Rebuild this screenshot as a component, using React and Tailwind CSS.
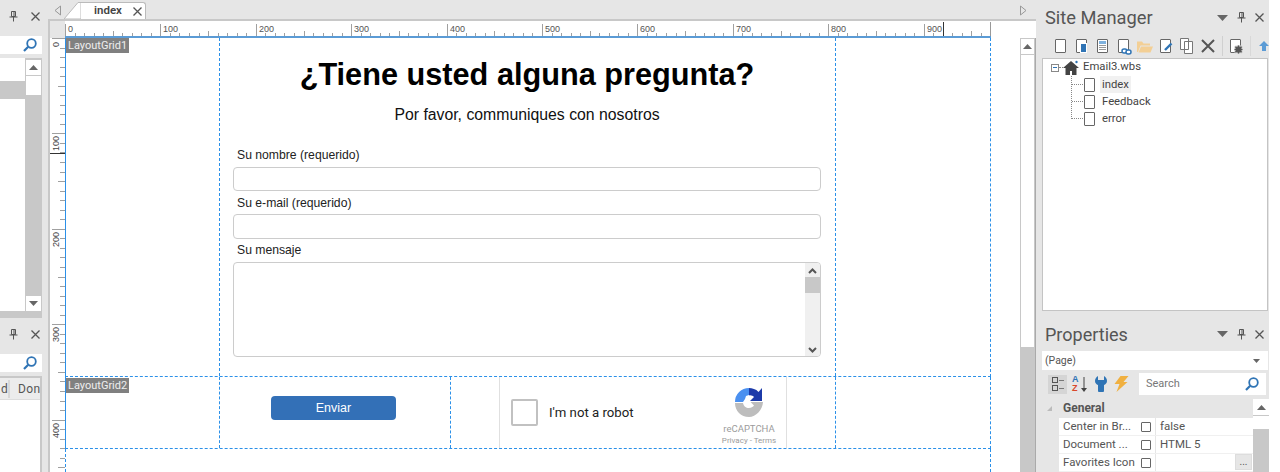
import React from 'react'

const SCALE = 95.4 / 100

function range(n) {
  return Array.from({ length: n }, (_, i) => i)
}

function Pin({ className = '' }) {
  return (
    <svg width="9" height="11" viewBox="0 0 9 11" className={className} fill="none" stroke="#555" strokeWidth="1">
      <path d="M2.500 .5h4v5h-4zM5 1v4.500M.5 6h8M4.500 6v4.500" />
    </svg>
  )
}

function Close() {
  return (
    <svg width="9" height="9" viewBox="0 0 9 9" stroke="#555" strokeWidth="1.300">
      <path d="M.5 .5l8 8M8.500 .5l-8 8" />
    </svg>
  )
}

function Caret() {
  return (
    <svg width="11" height="6" viewBox="0 0 11 6" fill="#666">
      <path d="M0 0h11l-5.500 6z" />
    </svg>
  )
}

function SearchIcon() {
  return (
    <svg width="14" height="14" viewBox="0 0 14 14" fill="none" stroke="#2f74b5" strokeWidth="1.800">
      <circle cx="8.500" cy="5.500" r="4.300" />
      <path d="M5.200 8.800L1 13" strokeWidth="2.200" />
    </svg>
  )
}

function ArrowBtn({ up, className = '' }) {
  return (
    <div className={`flex items-center justify-center bg-white ${className}`}>
      <svg width="9" height="5" viewBox="0 0 9 5" fill="#666">
        <path d={up ? 'M4.500 0L9 5H0z' : 'M0 0h9L4.500 5z'} />
      </svg>
    </div>
  )
}

function PageIcon({ className = '' }) {
  return <div className={`w-[11px] h-[14px] rounded-[1px] border border-[#666] bg-white ${className}`} />
}

function HRuler() {
  return (
    <svg width="970" height="17" className="block">
      {range(98).map(i => {
        const x = 0.5 + Math.round(i * 10 * SCALE)
        const major = i % 10 === 0
        const mid = i % 5 === 0
        return <line key={i} x1={x} x2={x} y1={major ? 3 : mid ? 10 : 12} y2="16" stroke="#a0a0a0" />
      })}
      {range(10).map(i => (
        <text key={i} x={Math.round(i * 100 * SCALE) + 3} y="11" fontSize="9" fontFamily="'Liberation Sans', sans-serif" fill="#555">
          {i * 100}
        </text>
      ))}
      <line x1="878.500" x2="878.500" y1="1" y2="16" stroke="#333" />
      <rect x="925" y="1" width="4" height="15" fill="#999" />
    </svg>
  )
}

function VRuler() {
  return (
    <svg width="15" height="434" className="block bg-white">
      {range(46).map(i => {
        const y = 0.5 + Math.round(i * 10 * SCALE)
        const major = i % 10 === 0
        const mid = i % 5 === 0
        return <line key={i} y1={y} y2={y} x1={major ? 2 : mid ? 8 : 10} x2="15" stroke="#a0a0a0" />
      })}
      {range(5).map(i => {
        const y = Math.round(i * 100 * SCALE) + (i === 0 ? 9 : 18)
        return (
          <text key={i} x="0" y="0" transform={`translate(9 ${y}) rotate(-90)`} fontSize="9" fontFamily="'Liberation Sans', sans-serif" fill="#444">
            {i * 100}
          </text>
        )
      })}
      <line x1="0" x2="15" y1="115.500" y2="115.500" stroke="#333" />
    </svg>
  )
}

function LeftPanel() {
  return (
    <aside className="w-[42px] shrink-0 flex flex-col overflow-hidden">
      <div className="h-[36px] shrink-0 flex items-center gap-[13px] pl-[9px] pb-[4px]">
        <Pin />
        <Close />
      </div>
      <div className="h-[18px] shrink-0 bg-white flex items-center justify-end pr-[5px]">
        <SearchIcon />
      </div>
      <div className="h-[4px] shrink-0" />
      <div className="h-[253px] shrink-0 flex bg-white">
        <div className="w-[25px] pt-[23px]">
          <div className="h-[18px] bg-[#c8c8c8]" />
        </div>
        <div className="w-[17px] bg-[#c8c8c8] flex flex-col px-px pt-[2px]">
          <ArrowBtn up className="h-[15px]" />
          <div className="h-[19px] bg-white mt-px" />
          <div className="flex-1" />
          <ArrowBtn className="h-[15px]" />
        </div>
      </div>
      <div className="h-[7px] shrink-0 bg-[#c8c8c8]" />
      <div className="h-[36px] shrink-0 flex items-center gap-[13px] pl-[9px] pb-[4px]">
        <Pin />
        <Close />
      </div>
      <div className="h-[18px] shrink-0 bg-white flex items-center justify-end pr-[5px]">
        <SearchIcon />
      </div>
      <div className="h-[4px] shrink-0" />
      <div className="flex-1 bg-white border-r-2 border-t-2 border-[#c8c8c8]">
        <div className="h-[22px] flex items-center bg-[#ececec] text-[12px] text-[#555] tracking-wide border-b border-[#ddd]">
          <span className="w-[10px] pl-px">d</span>
          <span className="pl-[8px] border-l-2 border-[#d8d8d8] whitespace-nowrap">Don</span>
        </div>
      </div>
    </aside>
  )
}

function TabStrip() {
  return (
    <div className="h-[19px] shrink-0 flex items-end relative">
      <svg width="9" height="11" viewBox="0 0 9 11" className="absolute left-[5px] top-[5px]" fill="none" stroke="#999">
        <path d="M7.500 1L2 5.500l5.500 4.500z" />
      </svg>
      <div className="w-[16px]" />
      <svg width="17" height="17" viewBox="0 0 17 17" className="block">
        <path d="M0 17L14 .5h3V17z" fill="#fff" stroke="#bbb" />
      </svg>
      <div className="h-[17px] w-[65px] bg-white border-t border-r border-[#bbb] rounded-tr-[3px] flex items-center pl-[13px] gap-[11px]">
        <span className="text-[11.500px] font-semibold text-[#444]">index</span>
        <Close />
      </div>
      <svg width="9" height="11" viewBox="0 0 9 11" className="absolute right-[8px] top-[5px]" fill="none" stroke="#999">
        <path d="M1.500 1L7 5.500 1.500 10z" />
      </svg>
    </div>
  )
}

function Captcha() {
  return (
    <div className="ml-[48px] w-[288px] h-full border-x border-[#e0e0e0] flex items-center bg-white">
      <div className="ml-[11px] w-[27px] h-[27px] rounded-[2px] border-2 border-[#c1c1c1]" />
      <span className="ml-[11px] text-[13.200px] text-[#222] font-['Roboto',sans-serif]">I'm not a robot</span>
      <div className="ml-auto mr-[11px] w-[52px] h-full flex flex-col items-center pt-[10px]">
        <svg width="30" height="30" viewBox="0 0 30 30">
          {/* blue, top left */}
          <path d="M15 1a14 14 0 0 0-14 14h8l2-3 1-3 3-1z" fill="#4a90f0" />
          {/* dark blue with its arrow, top right */}
          <path d="M15 1c3 0 7 1 9.500 4L28 1v13H16l4-4c-1-1-3-2-5-1.500z" fill="#1c3aa9" />
          {/* grey, bottom */}
          <path d="M1 16h8c.5 3 3 5 6 5 2 0 4-1 5-2.500l-3.500-3.500H29c-.5 8-7 15-14 15-8 0-14-6-14-14z" fill="#bdbdbd" />
        </svg>
        <span className="mt-[6px] text-[9.500px] leading-[11px] text-[#9b9b9b] font-['Roboto',sans-serif]">reCAPTCHA</span>
        <span className="mt-[2px] text-[8px] leading-[10px] text-[#9b9b9b] font-['Roboto',sans-serif] whitespace-nowrap">Privacy - Terms</span>
      </div>
    </div>
  )
}

function Canvas() {
  const cell = 'border-r border-dashed border-[#2b90e8]'
  const grid = 'w-[926px] shrink-0 grid border-x border-b border-dashed border-[#2b90e8] [border-left-style:solid]'
  const label = 'h-[18px] flex items-center pl-[4px] text-[12.200px] text-[#222]'
  return (
    <div className="flex-1 bg-white relative flex flex-col font-['Liberation_Sans',Arial,sans-serif]">
      <div className={`${grid} h-[339px] grid-cols-[154px_616px_154px]`}>
        <div className={cell} />
        <div className={`${cell} pl-[13px] pr-[14px] pt-[4px]`}>
          <h1 className="h-[64px] pt-[2px] flex items-center justify-center text-[30.700px] font-bold text-black whitespace-nowrap">¿Tiene usted alguna pregunta?</h1>
          <p className="h-[18px] flex items-center justify-center text-[15.800px] text-[#111]">Por favor, communiques con nosotros</p>
          <label className={`mt-[22px] ${label}`}>Su nombre (requerido)</label>
          <input type="text" className="mt-[3px] w-full h-[24px] block border border-[#ccc] rounded-[4px] bg-white" />
          <label className={`mt-[3px] ${label}`}>Su e-mail (requerido)</label>
          <input type="text" className="mt-[2px] w-full h-[25px] block border border-[#ccc] rounded-[4px] bg-white" />
          <label className={`mt-[2px] ${label}`}>Su mensaje</label>
          <div className="mt-[3px] h-[95px] border border-[#ccc] rounded-[4px] flex justify-end overflow-hidden">
            <div className="w-[15px] bg-[#f0f0f0] flex flex-col items-center pt-[5px] pb-[3px]">
              <svg width="9" height="6" viewBox="0 0 9 6" fill="none" stroke="#555" strokeWidth="2"><path d="M1 5l3.500-3.500L8 5" /></svg>
              <div className="w-full h-[16px] mt-[3px] bg-[#c8c8c8]" />
              <div className="flex-1" />
              <svg width="9" height="6" viewBox="0 0 9 6" fill="none" stroke="#555" strokeWidth="2"><path d="M1 1l3.500 3.500L8 1" /></svg>
            </div>
          </div>
        </div>
        <div />
      </div>
      <div className={`${grid} h-[72px] grid-cols-[154px_231px_385px_154px]`}>
        <div className={cell} />
        <div className={`${cell} pl-[51px] pt-[18px]`}>
          <button className="w-[125px] h-[24px] rounded-[4px] bg-[#3370b7] text-white text-[12.500px]">Enviar</button>
        </div>
        <div className={cell}>
          <Captcha />
        </div>
        <div />
      </div>
      <div className="w-[926px] flex-1 border-x border-dashed border-[#2b90e8]" />
      <div className="absolute left-[1px] top-0 w-[63px] h-[15px] bg-[#808080] text-[#eee] text-[11px] leading-[15px] pl-[2px]">
        <span className="font-['Roboto',sans-serif]">LayoutGrid1</span>
      </div>
      <div className="absolute left-[1px] top-[340px] w-[63px] h-[15px] bg-[#808080] text-[#eee] text-[11px] leading-[15px] pl-[2px]">
        <span className="font-['Roboto',sans-serif]">LayoutGrid2</span>
      </div>
    </div>
  )
}

function Center() {
  return (
    <main className="w-[988px] shrink-0 flex flex-col">
      <TabStrip />
      <div className="h-[19px] shrink-0 flex border-l-2 border-t-2 border-[#c8c8c8] bg-white">
        <div className="w-[15px] bg-[#e6e6e6] shrink-0" />
        <div className="w-[926px] h-[17px] shrink-0 border-b-2 border-[#5b9bd5] overflow-hidden">
          <HRuler />
        </div>
      </div>
      <div className="flex-1 flex min-h-0 overflow-hidden border-l-2 border-[#c8c8c8]">
        <div className="w-[15px] shrink-0">
          <VRuler />
        </div>
        <Canvas />
        <div className="w-[16px] shrink-0 bg-[#c8c8c8] flex flex-col pt-[1px] border-r border-[#aaa]">
          <ArrowBtn up className="h-[15px] mx-px" />
          <div className="h-[292px] mt-px bg-white mx-px" />
        </div>
      </div>
    </main>
  )
}

function Toolbar() {
  return (
    <div className="h-[24px] shrink-0 flex items-center pl-[15px]">
      <PageIcon />
      <div className="ml-[10px] relative w-[11px] h-[14px]">
        <PageIcon />
        <div className="absolute left-[4px] top-[4px] w-[7px] h-[10px] bg-[#2f74b5] border border-white" />
      </div>
      <div className="ml-[10px] w-[11px] h-[14px] rounded-[1px] border border-[#666] bg-white flex flex-col gap-px p-px">
        <div className="h-[3px] bg-[#7fb2de]" />
        <div className="h-px bg-[#999]" />
        <div className="h-px bg-[#999]" />
        <div className="h-px bg-[#999]" />
      </div>
      <div className="ml-[10px] relative w-[11px] h-[14px]">
        <PageIcon />
        <svg width="11" height="7" viewBox="0 0 11 7" className="absolute left-[3px] top-[9px]" fill="#fff" stroke="#2f74b5" strokeWidth="1.500">
          <rect x="1" y="1" width="5" height="4" rx="2" />
          <rect x="5" y="2" width="5" height="4" rx="2" />
        </svg>
      </div>
      <svg width="16" height="13" viewBox="0 0 16 13" className="ml-[8px]" fill="#f3cf95">
        <path d="M0 12V1.500h5l1.500 2H13v2H3.500L1 12zM4 6.500h12L13.500 12.500H1.500z" />
      </svg>
      <div className="ml-[7px] relative w-[11px] h-[14px]">
        <PageIcon />
        <svg width="10" height="10" viewBox="0 0 10 10" className="absolute left-[3px] top-[3px]" fill="none" stroke="#2f74b5" strokeWidth="2.400">
          <path d="M8.500 1.500L2 8" />
        </svg>
      </div>
      <svg width="13" height="16" viewBox="0 0 13 16" className="ml-[9px]" fill="#fff" stroke="#777">
        <path d="M.5 .5h8v11h-8zM4.500 3.500h8v12h-8z" />
      </svg>
      <svg width="14" height="14" viewBox="0 0 14 14" className="ml-[8px]" stroke="#555" strokeWidth="2">
        <path d="M1 1l12 12M13 1L1 13" />
      </svg>
      <div className="ml-[7px] w-px h-[20px] bg-[#d0d0d0]" />
      <div className="ml-[7px] relative w-[11px] h-[14px]">
        <PageIcon />
        <svg width="9" height="9" viewBox="0 0 9 9" className="absolute left-[4px] top-[6px]" fill="#555" stroke="#e6e6e6" strokeWidth="0.800">
          <path d="M3.500 0h2l.3 1.500 1.300-.8 1.400 1.400-.8 1.300L9 3.700v1.600l-1.300.3.800 1.300-1.400 1.400-1.300-.8L5.500 9h-2l-.3-1.500-1.300.8L.5 6.900l.8-1.300L0 5.300V3.700l1.300-.3-.8-1.300L1.900.7l1.300.8z" />
        </svg>
      </div>
      <div className="ml-[9px] w-px h-[20px] bg-[#d8d8d8]" />
      <svg width="10" height="10" viewBox="0 0 10 10" className="ml-[8px]" fill="#5b9bd5">
        <path d="M5 0l5 5H7v5H3V5H0z" />
      </svg>
    </div>
  )
}

function TreeRow({ name, active }) {
  return (
    <div className="h-[17px] flex items-center">
      <div className="w-[11px] mr-[1px] border-t border-dotted border-[#888]" />
      <PageIcon />
      <span className={`ml-[5px] px-[2px] text-[11.300px] leading-[17px] text-[#444] ${active ? 'bg-[#f1f1f1]' : ''}`}>{name}</span>
    </div>
  )
}

function Tree() {
  return (
    <div className="h-[253px] shrink-0 ml-[2px] mr-px bg-white border border-[#c4c4c4] pl-[8px]">
      <div className="h-[17px] flex items-center">
        <div className="w-[8px] h-[8px] border border-[#888] flex items-center justify-center">
          <div className="w-[4px] h-px bg-[#2f74b5]" />
        </div>
        <div className="w-[4px] border-t border-dotted border-[#888]" />
        <svg width="16" height="15" viewBox="0 0 16 15" fill="#444">
          <path d="M8 1L0 8h2.500v7H7v-4h2v4h4.500V8H16z" />
          <circle cx="13.500" cy="2" r="1.200" fill="#2f74b5" />
        </svg>
        <span className="ml-[4px] text-[11.300px] text-[#444]">Email3.wbs</span>
      </div>
      <div className="ml-[20px] border-l border-dotted border-[#888] h-[43px]">
        <TreeRow name="index" active />
        <TreeRow name="Feedback" />
        <TreeRow name="error" />
      </div>
    </div>
  )
}

function PropRow({ name, value, more }) {
  return (
    <div className="h-[18px] flex bg-white border-b border-[#f0f0f0] text-[11.500px] leading-[17px] text-[#555]">
      <span className="w-[78px] pl-[4px] whitespace-nowrap overflow-hidden">{name}</span>
      <div className="w-[18px] pl-[4px] flex items-center">
        <div className="w-[10px] h-[10px] border border-[#666] rounded-[1px]" />
      </div>
      <span className="flex-1 border-l border-[#e6e6e6] pl-[4px]">{value}</span>
      {more && <span className="w-[17px] h-[16px] mr-px bg-[#e6e6e6] border border-[#ddd] text-center text-[10px] leading-[14px]">...</span>}
    </div>
  )
}

function GroupBox() {
  return (
    <div className="flex items-center gap-px">
      <div className="w-[6px] h-[6px] border border-[#555]" />
      <div className="w-[5px] h-px bg-[#777]" />
    </div>
  )
}

function Properties() {
  return (
    <div className="flex-1 flex flex-col min-h-0 overflow-hidden">
      <div className="h-[40px] shrink-0 flex items-center pl-[5px] pr-[5px] pt-[6px]">
        <span className="text-[18px] text-[#555] flex-1">Properties</span>
        <Caret />
        <Pin className="ml-[9px]" />
        <div className="ml-[9px]"><Close /></div>
      </div>
      <div className="h-[19px] shrink-0 ml-[2px] mr-px bg-white flex items-center justify-between pl-[3px] pr-[8px] text-[10.500px] text-[#555]">
        <span>(Page)</span>
        <svg width="7" height="4" viewBox="0 0 7 4" fill="#666"><path d="M0 0h7L3.500 4z" /></svg>
      </div>
      <div className="h-[22px] shrink-0 mt-[3px] flex items-center pl-[8px]">
        <div className="w-[19px] h-[19px] bg-[#d5d5d5] flex flex-col items-center justify-center gap-[2px]">
          <GroupBox />
          <GroupBox />
        </div>
        <div className="ml-[5px] w-[8px] text-[9px] leading-[9px] font-bold flex flex-col font-['Liberation_Sans',sans-serif]">
          <span className="text-[#2f74b5]">A</span>
          <span className="text-[#d9482b]">Z</span>
        </div>
        <svg width="6" height="15" viewBox="0 0 6 15" fill="#444" className="ml-px">
          <path d="M2.500 0h1v11H6l-3 4-3-4h2.500z" />
        </svg>
        <svg width="12" height="16" viewBox="0 0 12 16" className="ml-[8px]" fill="#2f74b5">
          <path d="M3 0C1 1 0 3 0 5c0 2 1.500 3.500 3 4v6c0 1 1 1 2 1h2c1 0 2 0 2-1V9c1.500-.5 3-2 3-4 0-2-1-4-3-5v4H3z" />
        </svg>
        <svg width="15" height="16" viewBox="0 0 14 16" className="ml-[7px]" fill="#f0b040">
          <path d="M6 0h8L9 6h4L2 16l3-8H0z" />
        </svg>
        <div className="ml-[10px] w-[127px] h-[22px] bg-white flex items-center justify-between px-[7px] text-[11px] text-[#777]">
          <span>Search</span>
          <SearchIcon />
        </div>
      </div>
      <div className="flex-1 flex mt-[4px]">
        <div className="flex-1 min-w-0">
          <div className="h-[19px] flex items-center pl-[7px] pb-px text-[12px] font-bold text-[#555]">
            <svg width="5" height="5" viewBox="0 0 5 5" fill="#bbb"><path d="M5 0v5H0z" /></svg>
            <span className="ml-[11px]">General</span>
          </div>
          <div className="ml-[19px]">
            <PropRow name="Center in Br..." value="false" />
            <PropRow name="Document ..." value="HTML 5" />
            <PropRow name="Favorites Icon" more />
          </div>
        </div>
        <div className="w-[16px] bg-[#c8c8c8] flex flex-col">
          <ArrowBtn up className="h-[16px]" />
          <div className="h-[13px] mt-px bg-white" />
        </div>
      </div>
    </div>
  )
}

function RightPanel() {
  return (
    <aside className="w-[229px] shrink-0 ml-[4px] flex flex-col">
      <div className="h-[34px] shrink-0 flex items-center pl-[5px] pr-[5px] pt-[1px]">
        <span className="text-[18.300px] text-[#555] flex-1">Site Manager</span>
        <Caret />
        <Pin className="ml-[9px]" />
        <div className="ml-[9px]"><Close /></div>
      </div>
      <Toolbar />
      <Tree />
      <Properties />
    </aside>
  )
}

export default function App() {
  return (
    <div className="w-[1280px] h-[472px] overflow-hidden flex bg-white font-['Roboto','Noto_Sans',sans-serif]">
      <div className="w-[1269px] shrink-0 flex bg-[#e6e6e6]">
        <LeftPanel />
        <div className="w-[6px] shrink-0" />
        <Center />
        <RightPanel />
      </div>
    </div>
  )
}
